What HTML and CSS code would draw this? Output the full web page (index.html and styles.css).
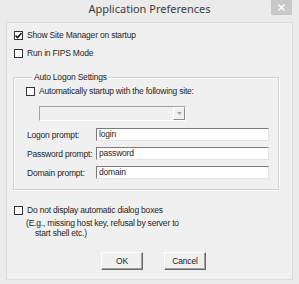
FILE: index.html
```html
<!DOCTYPE html>
<html lang="en">
<head>
    <meta charset="UTF-8">
    <title>Application Preferences</title>
    <link rel="stylesheet" href="styles.css">
</head>
<body>
    <div class="window">
        <div class="titlebar">
            <span class="title">Application Preferences</span>
            <span class="close">
                <svg width="7" height="7" viewBox="0 0 7 7">
                    <path d="M0.5 0.5 L6.5 6.5 M6.5 0.5 L0.5 6.5" stroke="#fff" stroke-width="1.4"/>
                </svg>
            </span>
        </div>
        <div class="client">
            <label class="check first">
                <span class="box">
                    <svg width="7" height="7" viewBox="0 0 7 7">
                        <path d="M0.5 3.5 L2.6 5.6 L6.5 1" fill="none" stroke="#111" stroke-width="1.5"/>
                    </svg>
                </span>
                Show Site Manager on startup
            </label>
            <label class="check second"><span class="box"></span>Run in FIPS Mode</label>

            <fieldset class="group">
                <legend>Auto Logon Settings</legend>
                <label class="check"><span class="box"></span>Automatically startup with the following site:</label>
                <div class="combo">
                    <span class="combo-btn">
                        <svg width="5" height="3" viewBox="0 0 5 3"><path d="M0 0 H5 L2.5 3 Z" fill="#a8a8a8"/></svg>
                    </span>
                </div>
                <div class="field login">
                    <span class="field-label">Logon prompt:</span>
                    <span class="input">login</span>
                </div>
                <div class="field">
                    <span class="field-label">Password prompt:</span>
                    <span class="input">password</span>
                </div>
                <div class="field">
                    <span class="field-label">Domain prompt:</span>
                    <span class="input">domain</span>
                </div>
            </fieldset>

            <label class="check dialogs"><span class="box"></span>Do not display automatic dialog boxes</label>
            <div class="note">
                <div>(E.g., missing host key, refusal by server to</div>
                <div class="note-indent">start shell etc.)</div>
            </div>

            <div class="buttons">
                <button class="btn">OK</button>
                <button class="btn">Cancel</button>
            </div>
        </div>
    </div>
</body>
</html>
```

FILE: styles.css
```css
* {
    margin: 0;
    padding: 0;
    box-sizing: border-box;
}
body {
    width: 299px;
    height: 284px;
    background: #ebebeb;
    font-family: "Liberation Sans", Arial, sans-serif;
    font-size: 8.5px;
    letter-spacing: -0.2px;
    color: #1e1e1e;
    overflow: hidden;
}
.window {
    width: 299px;
    height: 284px;
    display: flex;
    flex-direction: column;
}
.titlebar {
    height: 22px;
    display: flex;
    justify-content: center;
    position: relative;
}
.title {
    font-family: "Noto Sans", "Liberation Sans", sans-serif;
    font-size: 11px;
    letter-spacing: 0;
    color: #3c3c3c;
    line-height: 22px;
    margin-top: -2px;
}
.close {
    position: absolute;
    top: 0;
    left: 271px;
    width: 21px;
    height: 15px;
    background: #c8c8c8;
    display: flex;
    align-items: center;
    justify-content: center;
}
.client {
    margin: 0 6px 4px 6px;
    flex: 1;
    background: #f0f0f0;
    border: 1px solid #dcdcdc;
    padding-left: 7px;
}

/* checkboxes */
.check {
    display: flex;
    align-items: center;
    gap: 4px;
    height: 12px;
    white-space: nowrap;
}
.check.first {
    margin-top: 6px;
}
.check.second {
    margin-top: 6px;
}
.box {
    width: 9px;
    height: 9px;
    border: 1px solid #333;
    background: #fff;
    display: flex;
    align-items: center;
    justify-content: center;
    flex-shrink: 0;
}

/* group box */
.group {
    margin: 12px 13px 0 -1px;
    border: 1px solid #d2d2d2;
    box-shadow: 1px 1px 0 #fff, inset 1px 1px 0 #fff;
    padding: 2px 9px 10px 12px;
}
.group legend {
    margin-left: 6px;
    padding: 0 2px;
    line-height: 12px;
    background: #f0f0f0;
}
.combo {
    margin: 9px 0 0 13px;
    width: 147px;
    height: 15px;
    background: #f0f0f0;
    border-top: 1px solid #a0a0a0;
    border-left: 1px solid #a0a0a0;
    border-right: 1px solid #fff;
    border-bottom: 1px solid #fff;
    display: flex;
    justify-content: flex-end;
}
.combo-btn {
    width: 12px;
    height: 13px;
    border-top: 1px solid #fff;
    border-left: 1px solid #fff;
    border-right: 1px solid #8a8a8a;
    border-bottom: 1px solid #8a8a8a;
    display: flex;
    align-items: center;
    justify-content: center;
}
.field {
    display: flex;
    align-items: center;
    margin-top: 6px;
}
.field.login {
    margin-top: 7px;
}
.field-label {
    width: 69px;
    margin-left: 1px;
    white-space: nowrap;
    flex-shrink: 0;
}
.input {
    width: 173px;
    height: 13px;
    line-height: 11px;
    background: #fff;
    border-top: 1px solid #7c7c7c;
    border-left: 1px solid #7c7c7c;
    border-right: 1px solid #e4e4e4;
    border-bottom: 1px solid #e4e4e4;
    padding-left: 2px;
}

/* bottom part */
.check.dialogs {
    margin-top: 14px;
}
.note {
    margin: 3px 0 0 12px;
    line-height: 9.5px;
}
.note-indent {
    padding-left: 9px;
}
.buttons {
    display: flex;
    gap: 21px;
    margin: 14px 0 0 87px;
}
.btn {
    width: 42px;
    height: 18px;
    font-family: inherit;
    font-size: 8.5px;
    letter-spacing: -0.2px;
    color: #1e1e1e;
    background: #f0f0f0;
    border-top: 1px solid #fff;
    border-left: 1px solid #fff;
    border-right: 1px solid #6a6a6a;
    border-bottom: 1px solid #6a6a6a;
    box-shadow: inset -1px -1px 0 #a0a0a0;
}
```
